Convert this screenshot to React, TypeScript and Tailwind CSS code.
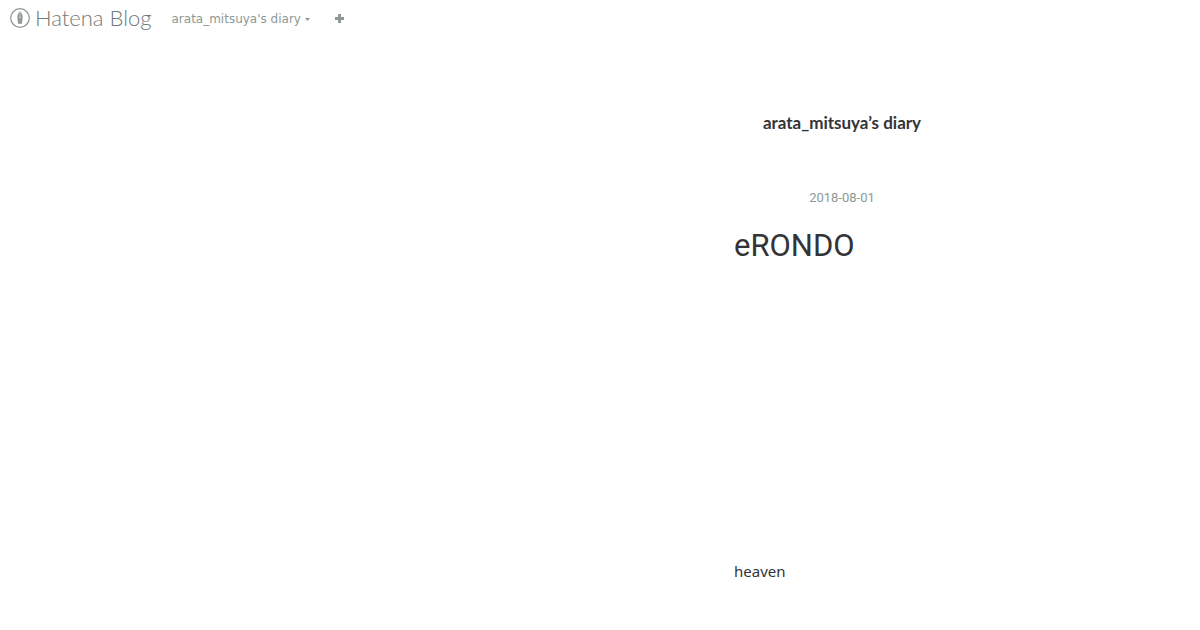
import { useState } from "react";

function HatenaLogo() {
  return (
    <a
      href="#"
      aria-label="Hatena Blog"
      className="flex items-center gap-1 text-[#8f9a99]"
    >
      <svg width="22" height="22" viewBox="0 0 22 22" fill="none">
        <circle cx="11" cy="11" r="9.3" stroke="currentColor" strokeWidth="1.3" />
        <path
          d="M11 4.2 C9.6 5.8 8.3 7.8 8.3 9.8 L9 16.8 H13 L13.7 9.8 C13.7 7.8 12.4 5.8 11 4.2 Z"
          fill="currentColor"
        />
        <path d="M11 4.5 V10" stroke="#fff" strokeWidth="0.4" />
        <circle cx="11" cy="10.4" r="0.6" fill="#fff" />
      </svg>
      <span className="flex gap-1.5 font-['Lato'] text-[22px] font-light leading-6 text-[#6f7b79]">
        <span>Hatena</span>
        <span>Blog</span>
      </span>
    </a>
  );
}

function GlobalHeader() {
  const [open, setOpen] = useState(false);

  return (
    <header className="flex h-9 items-center pl-[9px] font-['DejaVu_Sans',sans-serif] text-xs text-[#8c9996]">
      <HatenaLogo />
      <button
        className="ml-5 flex items-center gap-1 pt-0.5"
        aria-expanded={open}
        onClick={() => setOpen(!open)}
      >
        arata_mitsuya's diary
        <svg width="5" height="3" viewBox="0 0 5 3" fill="currentColor">
          <path d="M0 0 H5 L2.5 3 Z" />
        </svg>
      </button>
      <a href="#" aria-label="Write a new entry" className="ml-6">
        <svg width="11" height="11" viewBox="0 0 11 11" fill="currentColor">
          <path d="M4 1 H7 V4 H10 V7 H7 V10 H4 V7 H1 V4 H4 Z" />
        </svg>
      </a>
    </header>
  );
}

export default function App() {
  return (
    <div className="min-h-screen bg-white">
      <GlobalHeader />
      <div className="grid grid-cols-[734fr_216fr_250fr] pt-[75px] font-['Noto_Sans',sans-serif] text-[#333338]">
        <main className="col-start-2">
          <h1 className="text-center font-['Lato'] text-[17px] font-bold leading-6">
            <a href="#" className="whitespace-nowrap">
              arata_mitsuya’s diary
            </a>
          </h1>
          <article className="pt-[53px]">
            <time
              dateTime="2018-08-01"
              className="block text-center font-['Roboto'] text-[13px] leading-5 text-[#8c9996]"
            >
              2018-08-01
            </time>
            <h2 className="mt-4 font-['Roboto'] text-[31px] leading-[44px]">
              <a href="#">eRONDO</a>
            </h2>
            <p className="mt-[291px] text-[15px] leading-6">heaven</p>
          </article>
        </main>
      </div>
    </div>
  );
}
